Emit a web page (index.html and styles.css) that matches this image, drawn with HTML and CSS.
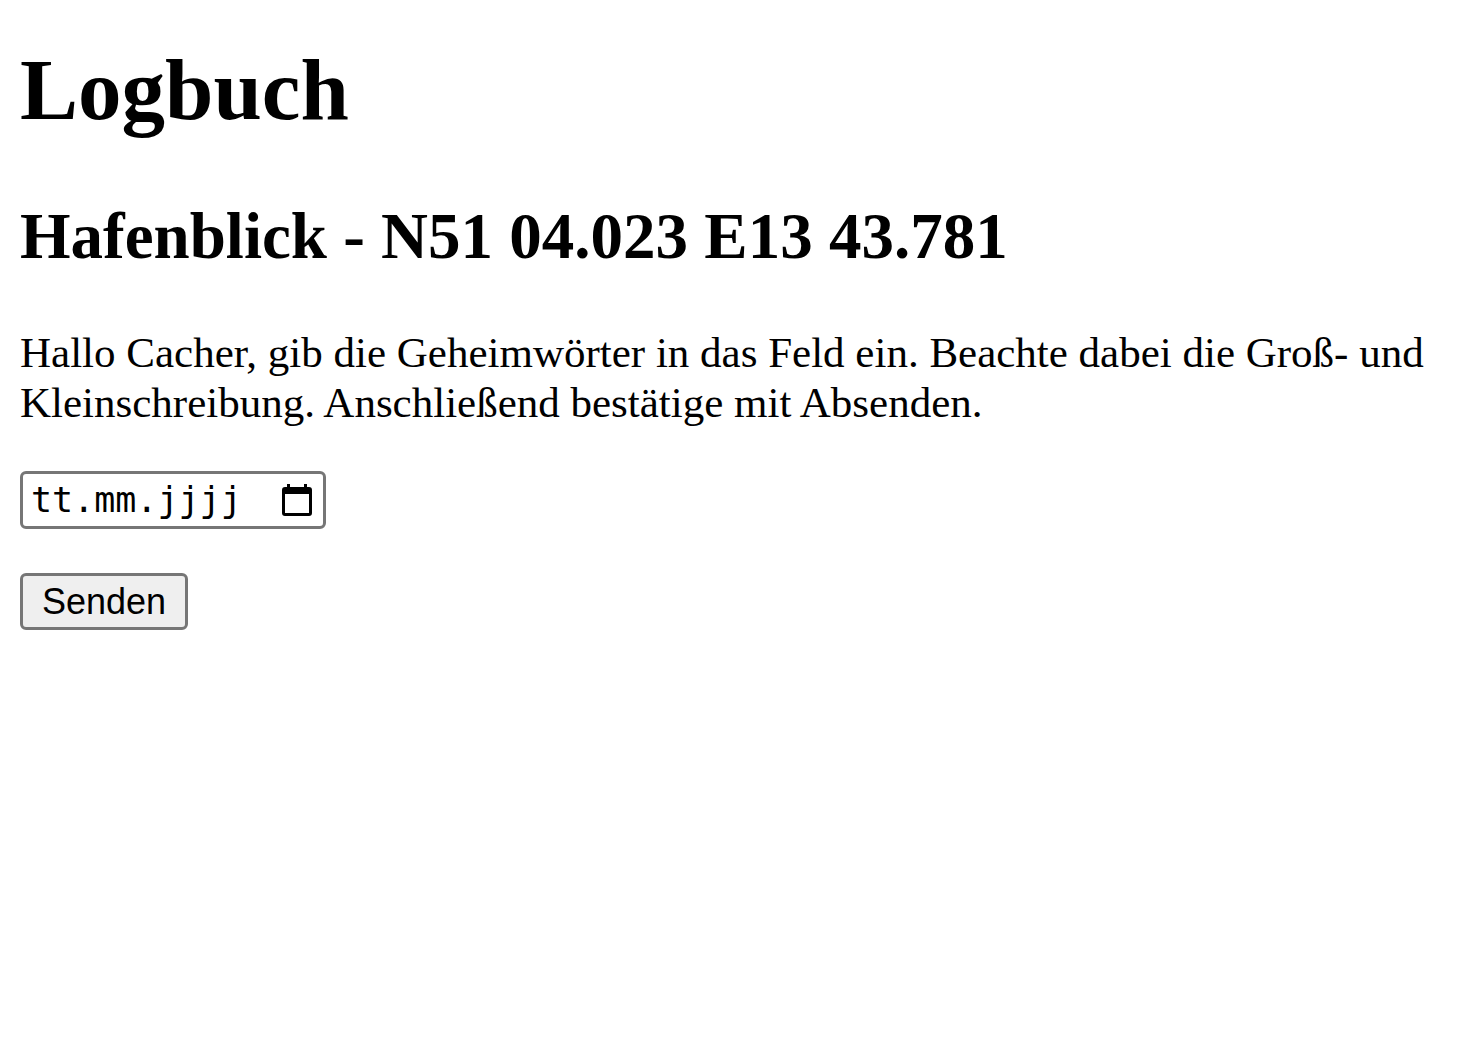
FILE: index.html
```html
<!DOCTYPE html>
<html lang="de">
  <head>
    <meta charset="utf-8">
    <title>Logbuch</title>
    <link rel="stylesheet" href="styles.css">
  </head>
  <body>

	<h1>Logbuch</h1>
	<h2>Hafenblick - N51 04.023 E13 43.781</h2>
	<p>Hallo Cacher, gib die Geheimwörter in das Feld ein. Beachte dabei die Groß- und Kleinschreibung. Anschließend bestätige mit Absenden.</p>

	<form action="">
		<div class="date-field">
			<input class="date-input" type="text" name="datum" placeholder="tt.mm.jjjj" aria-label="Datum" autocomplete="off">
			<button class="date-picker" type="button" aria-label="Kalender öffnen">
				<svg width="30" height="32" viewBox="0 0 30 32">
					<path fill="#000" fill-rule="evenodd" d="M5 0h3v3h14V0h3v3h2q3 0 3 3v23q0 3-3 3H3q-3 0-3-3V6q0-3 3-3h2zM3 10v19h24V10z"/>
				</svg>
			</button>
		</div>
		<button class="send" type="submit">Senden</button>
	</form>

  </body>
</html>
```
FILE: styles.css
```css
body { margin: 20px; font-family: "Liberation Serif", "Times New Roman", serif; font-size: 43px; line-height: 50px; color: #000; background: #fff; }

h1 { margin: 0; padding-top: 20px; font-size: 87px; line-height: 100px; }
h2 { margin: 59px 0 0; font-size: 65px; line-height: 74px; }
p { margin: 55px 0 43px; }

form { display: flex; flex-direction: column; align-items: flex-start; gap: 44px; }

.date-field { display: flex; align-items: center; box-sizing: border-box; width: 306px; height: 58px; padding: 0 11px 0 8px; border: 3px solid #767676; border-radius: 6px; background: #fff; }
.date-input { flex: 1; min-width: 0; padding: 0; border: none; outline: none; background: none; font-family: "DejaVu Sans Mono", monospace; font-size: 35px; color: #000; }
.date-input::placeholder { color: #000; opacity: 1; }
.date-picker { display: flex; padding: 0; border: none; background: none; }

.send { height: 57px; padding: 0 19px; border: 3px solid #767676; border-radius: 6px; background: #efefef; font-family: "Liberation Sans", Arial, sans-serif; font-size: 36px; color: #000; }
```
